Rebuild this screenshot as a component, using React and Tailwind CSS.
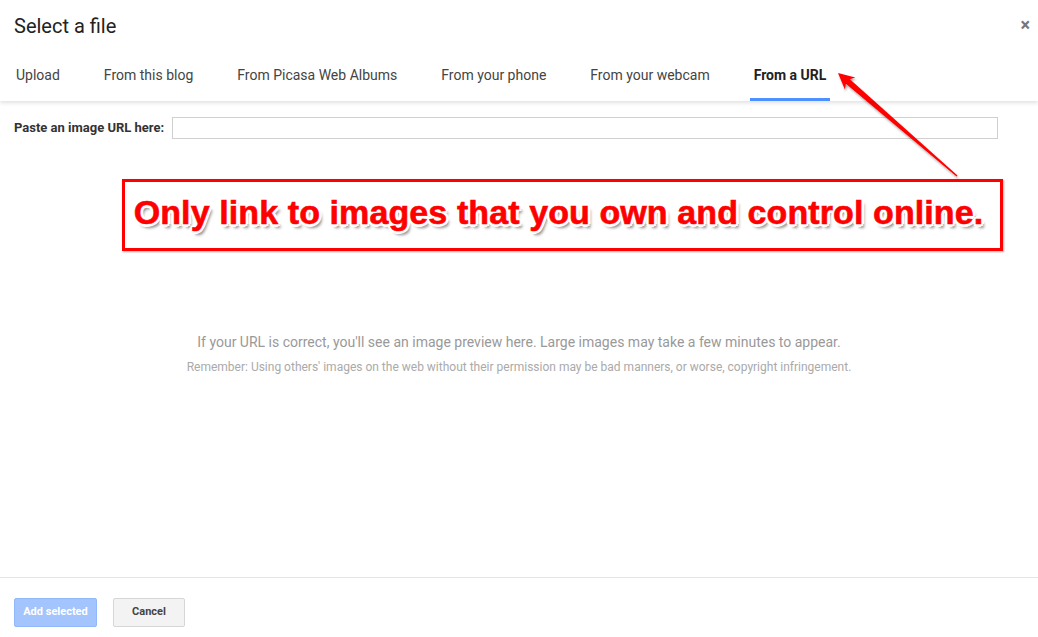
import React from "react";

const tabs = [
    "Upload",
    "From this blog",
    "From Picasa Web Albums",
    "From your phone",
    "From your webcam",
    "From a URL",
];

export default function App() {
    const active = "From a URL";

    return (
        <div className="relative w-[1038px] h-[637px] bg-white flex flex-col overflow-hidden font-['Roboto',_'Liberation_Sans',_sans-serif]">
            {/* Header */}
            <div className="relative z-10 shadow-[0_2px_4px_rgba(0,0,0,0.12)]">
                <div className="h-[50px] flex items-start justify-between pl-[14px] pr-[6px] pt-[14px]">
                    <h1 className="text-[20px] leading-[24px] text-[#222]">Select a file</h1>
                    <button className="text-[18px] leading-[20px] font-bold text-[#777] mt-[1px] px-[2px]">×</button>
                </div>
                <div className="flex gap-[36px] pl-[12px]">
                    {tabs.map((t) => (
                        <div
                            key={t}
                            className={
                                t === active
                                    ? "px-[4px] pt-[15px] pb-[13px] border-b-[3px] border-[#4d90fe] text-[14px] leading-[20px] text-[#222] font-bold"
                                    : "px-[4px] pt-[15px] pb-[13px] border-b-[3px] border-transparent text-[14px] leading-[20px] text-[#444]"
                            }
                        >
                            {t}
                        </div>
                    ))}
                </div>
            </div>

            {/* Body */}
            <div className="flex-1 flex flex-col">
                <div className="flex items-center pt-[16px] pl-[14px]">
                    <label className="w-[158px] text-[13px] font-bold text-[#333]">Paste an image URL here:</label>
                    <input
                        type="text"
                        className="w-[826px] h-[22px] border border-[#d0d0d0] outline-none"
                    />
                </div>
                <div className="mt-[193px] flex flex-col items-center gap-[7px]">
                    <p className="text-[14px] leading-[20px] text-[#999]">
                        If your URL is correct, you'll see an image preview here. Large images may take a few minutes to appear.
                    </p>
                    <p className="text-[12px] leading-[16px] text-[#aaa]">
                        Remember: Using others' images on the web without their permission may be bad manners, or worse, copyright infringement.
                    </p>
                </div>
            </div>

            {/* Footer */}
            <div className="h-[60px] border-t border-[#e5e5e5] flex items-start gap-[16px] pl-[14px] pt-[20px]">
                <button className="h-[29px] w-[83px] rounded-[2px] bg-[#a3c4fc] border border-[#93b8fa] text-white text-[11px] font-bold">
                    Add selected
                </button>
                <button className="h-[29px] w-[72px] rounded-[2px] bg-[#f3f3f3] border border-[#d6d6d6] text-[#444] text-[11px] font-bold">
                    Cancel
                </button>
            </div>

            {/* Annotation box */}
            <div className="absolute left-[122px] top-[179px] w-[881px] h-[72px] border-[3px] border-[#ff0000] flex items-center justify-center shadow-[1px_1px_2px_rgba(0,0,0,0.3)]">
                <span className="font-['Liberation_Sans',_Arial,_sans-serif] font-bold text-[34px] leading-[40px] tracking-[0.1px] text-[#ff0000] mb-[6px] mr-[8px] [-webkit-text-stroke:0.6px_#ff0000] [text-shadow:-2px_-2px_0_#fff,2px_-2px_0_#fff,-2px_2px_0_#fff,2px_2px_0_#fff,0_3px_0_#fff,0_-3px_0_#fff,3px_0_0_#fff,-3px_0_0_#fff,3px_4px_3px_rgba(0,0,0,0.45)]">
                    Only link to images that you own and control online.
                </span>
            </div>

            {/* Annotation arrow */}
            <svg
                className="absolute inset-0 pointer-events-none"
                width="1038"
                height="637"
                viewBox="0 0 1038 637"
            >
                <defs>
                    <filter id="sh" x="-20%" y="-20%" width="140%" height="140%">
                        <feDropShadow dx="1" dy="2" stdDeviation="1.2" floodColor="#000" floodOpacity="0.35" />
                    </filter>
                </defs>
                <polygon
                    points="838,73 855.3,77.4 849.9,79.2 957.5,175.4 956.5,176.6 845.9,83.8 844.9,89.5"
                    fill="#ff0000"
                    filter="url(#sh)"
                />
            </svg>
        </div>
    );
}
